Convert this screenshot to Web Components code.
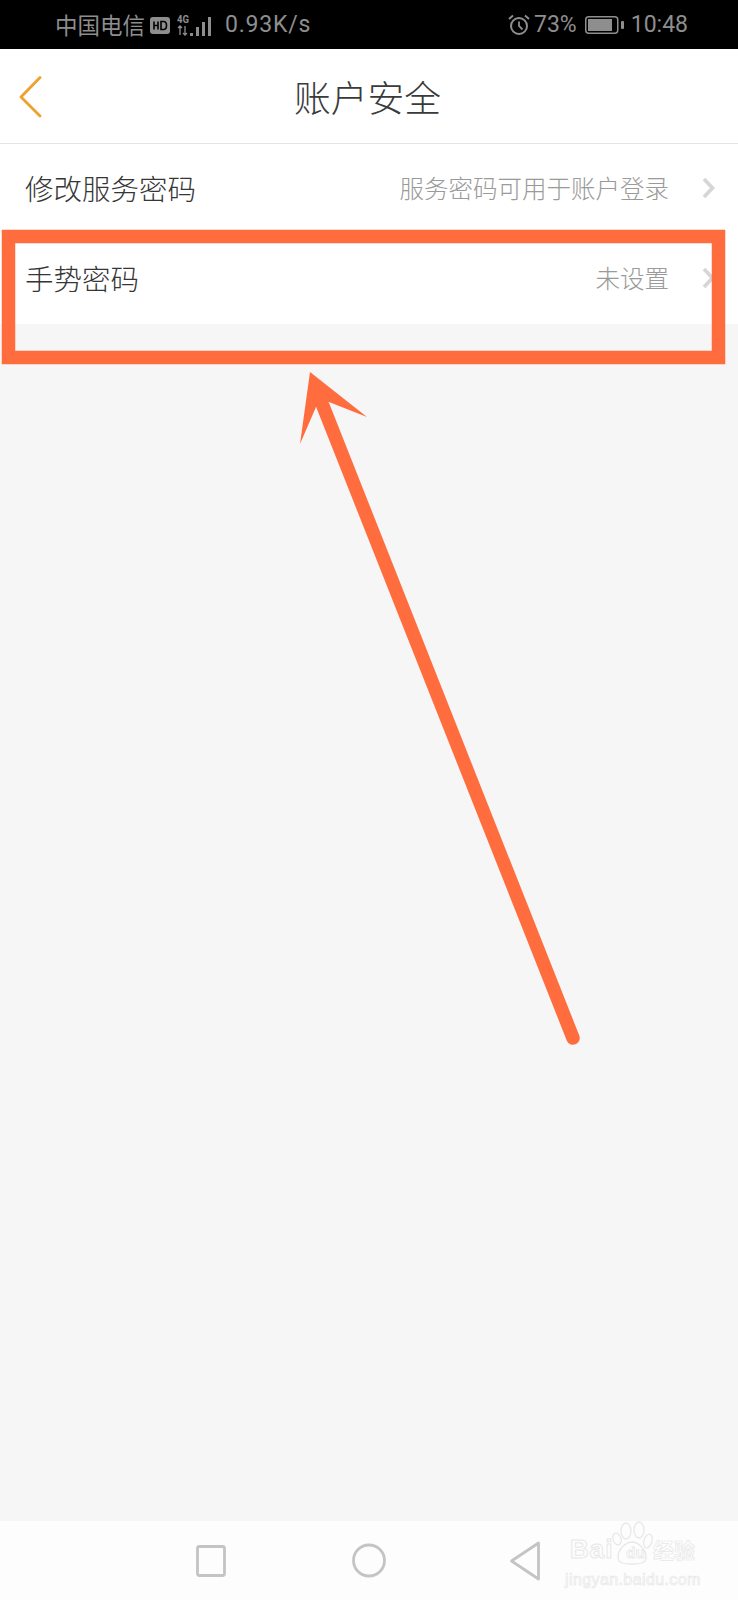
<!DOCTYPE html>
<html>
<head>
<meta charset="utf-8">
<style>
html, body { margin: 0; padding: 0; }
body { width: 738px; height: 1600px; overflow: hidden; font-family: "Noto Sans CJK SC", "Liberation Sans", sans-serif; }
</style>
</head>
<body>
<phone-screen>
  <status-bar slot="status"></status-bar>
  <title-bar slot="title">账户安全</title-bar>
  <setting-row label="修改服务密码" hint="服务密码可用于账户登录"></setting-row>
  <setting-row label="手势密码" hint="未设置"></setting-row>
  <nav-bar slot="nav"></nav-bar>
  <arrow-note slot="note"></arrow-note>
</phone-screen>

<script>
customElements.define('phone-screen', class extends HTMLElement {
    constructor() {
        super()
        let sr = this.attachShadow({mode: 'open'})
        sr.innerHTML = `
<style>
:host {
  display: flex;
  flex-direction: column;
  width: 738px;
  height: 1600px;
  position: relative;
  background: #f6f6f6;
}
#list { flex: 1; display: flex; flex-direction: column; }
</style>
<slot name="status"></slot>
<slot name="title"></slot>
<div id="list"><slot></slot></div>
<slot name="nav"></slot>
<slot name="note"></slot>`
    }
})

customElements.define('status-bar', class extends HTMLElement {
    constructor() {
        super()
        let sr = this.attachShadow({mode: 'open'})
        sr.innerHTML = `
<style>
:host {
  display: flex;
  align-items: center;
  height: 49px;
  background: #000;
  color: #8e8e8e;
  font: 23px/1 Roboto, "Noto Sans CJK SC", sans-serif;
  padding: 0 50px 0 55px;
  box-sizing: border-box;
}
span { white-space: nowrap; }
.cn { font-size: 22.500px; font-family: "Noto Sans CJK SC", sans-serif; }
svg { display: block; flex: none; }
#gap { flex: 1; }
</style>
<span class="cn">中国电信</span>
<svg width="20" height="17" viewBox="0 0 20 17" style="margin-left:5px;margin-top:2px">
  <rect width="20" height="17" rx="3" fill="#8e8e8e"/>
  <path d="M4 4.500v8M8 4.500v8M4 8.500h4" stroke="#000" stroke-width="1.600" fill="none"/>
  <path d="M11 4.500v8h2.500q3 0 3-4t-3-4z" stroke="#000" stroke-width="1.600" fill="none"/>
</svg>
<svg width="35" height="24" viewBox="0 0 35 24" style="margin-left:7px;margin-top:2px" fill="#8e8e8e">
  <text x="0" y="9" font-size="11" font-weight="700" font-family="Roboto" textLength="12" lengthAdjust="spacingAndGlyphs">4G</text>
  <path d="M3 12v9M1 14l2-2 2 2M8 12v9M6 19l2 2 2-2" stroke="#8e8e8e" stroke-width="1.300" fill="none"/>
  <rect x="13" y="19" width="3" height="3"/>
  <rect x="19" y="13" width="3" height="9"/>
  <rect x="25" y="8" width="3" height="14"/>
  <rect x="31" y="3" width="3" height="19"/>
</svg>
<span style="margin-left:13px;letter-spacing:.8px">0.93K/s</span>
<div id="gap"></div>
<svg width="24" height="24" viewBox="0 0 24 24" fill="none" stroke="#8e8e8e">
  <circle cx="12" cy="13" r="8" stroke-width="2"/>
  <path d="M12 8.500V13l3.500 3.500" stroke-width="1.800"/>
  <path d="M2 6l4-3.500M22 6l-4-3.500" stroke-width="2"/>
</svg>
<span style="margin-left:3px">73%</span>
<svg width="39" height="18" viewBox="0 0 39 18" style="margin-left:8px">
  <rect x=".75" y=".75" width="32" height="16.500" rx="3" fill="none" stroke="#8e8e8e" stroke-width="1.500"/>
  <rect x="3" y="3" width="24" height="12" fill="#8e8e8e"/>
  <rect x="36" y="5" width="3" height="8" rx="1" fill="#8e8e8e"/>
</svg>
<span style="margin-left:7px">10:48</span>`
    }
})

customElements.define('title-bar', class extends HTMLElement {
    constructor() {
        super()
        let sr = this.attachShadow({mode: 'open'})
        sr.innerHTML = `
<style>
:host {
  display: flex;
  align-items: center;
  justify-content: center;
  height: 95px;
  padding-right: 3px;
  position: relative;
  background: #fff;
  border-bottom: 1px solid #e4e4e4;
  color: #3a3a3a;
  font: 300 36.800px/1 "Noto Sans CJK SC", sans-serif;
  box-sizing: border-box;
}
svg { position: absolute; left: 18px; top: 27px; }
</style>
<svg width="26" height="42" viewBox="0 0 26 42" fill="none">
  <path d="M22 1.500 3 21l19 19" stroke="#f0a02c" stroke-width="2.800" stroke-linecap="round" stroke-linejoin="round"/>
</svg>
<slot></slot>`
    }
})

customElements.define('setting-row', class extends HTMLElement {
    constructor() {
        super()
        let sr = this.attachShadow({mode: 'open'})
        sr.innerHTML = `
<style>
:host {
  display: flex;
  align-items: center;
  height: 90px;
  padding: 0 23px 3px 25px;
  box-sizing: border-box;
  background: #fff;
  font-family: "Noto Sans CJK SC", sans-serif;
}
#label { flex: 1; font-size: 28.500px; font-weight: 300; color: #363636; }
#hint { font-size: 24.500px; font-weight: 300; color: #9a9a9a; }
svg { margin-left: 33px; flex: none; }
</style>
<span id="label">${this.getAttribute('label')}</span>
<span id="hint">${this.getAttribute('hint')}</span>
<svg width="13" height="22" viewBox="0 0 13 22" fill="none">
  <path d="M2 2l8.500 9L2 20" stroke="#d6d6d6" stroke-width="3.800"/>
</svg>`
    }
})

customElements.define('nav-bar', class extends HTMLElement {
    constructor() {
        super()
        let sr = this.attachShadow({mode: 'open'})
        sr.innerHTML = `
<style>
:host {
  display: block;
  height: 79px;
  position: relative;
  background: #fdfdfd;
}
svg { position: absolute; left: 0; top: 0; }
#mark {
  position: absolute;
  left: 565px;
  top: 19px;
  width: 136px;
  color: #fdfdfd;
  -webkit-text-stroke: 1px #e8e8e8;
  font-family: "Liberation Sans", "Noto Sans CJK SC", sans-serif;
  display: flex;
  flex-direction: column;
  gap: 14px;
}
#top { display: flex; align-items: center; height: 19px; padding-left: 5px; }
#bai { font-size: 26px; line-height: 19px; font-weight: 700; letter-spacing: 1px; width: 48px; }
#du { font-size: 15px; line-height: 19px; font-weight: 700; width: 35px; text-align: center; margin-top: 5px; -webkit-text-stroke-width: .8px; }
#cn { font: 700 21px/19px "Noto Sans CJK SC", sans-serif; -webkit-text-stroke-width: .7px; }
#jy { font-size: 16px; line-height: 14px; white-space: nowrap; letter-spacing: .4px; -webkit-text-stroke-width: .7px; }
</style>
<svg width="738" height="79" viewBox="0 0 738 79" fill="none" stroke="#c4c4c4" stroke-width="2.800" stroke-linejoin="round">
  <rect x="197.500" y="25.500" width="27" height="29" rx="2"/>
  <circle cx="369" cy="39.500" r="15.500"/>
  <path d="M511.500 40l27-18v36z"/>
  <g stroke="#e8e8e8" stroke-width="1.300">
    <path d="M618 36c0-8 8-15 14-15s14 7 14 15c0 6-5 7-14 7s-14-1-14-7z"/>
    <ellipse cx="617" cy="18" rx="4" ry="6" transform="rotate(-20 617 18)"/>
    <ellipse cx="626" cy="10" rx="5" ry="8"/>
    <ellipse cx="639" cy="9" rx="5" ry="8"/>
    <ellipse cx="648" cy="20" rx="4" ry="7" transform="rotate(15 648 20)"/>
  </g>
</svg>
<div id="mark">
  <div id="top">
    <span id="bai">Bai</span>
    <span id="du">du</span>
    <span id="cn">经验</span>
  </div>
  <span id="jy">jingyan.baidu.com</span>
</div>`
    }
})

customElements.define('arrow-note', class extends HTMLElement {
    constructor() {
        super()
        let sr = this.attachShadow({mode: 'open'})
        sr.innerHTML = `
<style>
:host { position: absolute; left: 0; top: 0; width: 738px; height: 1600px; pointer-events: none; }
svg { display: block; }
</style>
<svg width="738" height="1600" viewBox="0 0 738 1600" fill="none">
  <rect x="8.500" y="236.500" width="710" height="121" stroke="#ff6d3f" stroke-width="13.500"/>
  <path d="M573 1038 323 406" stroke="#ff6d3f" stroke-width="13.500" stroke-linecap="round"/>
  <path d="M310 372l57 45-38-15-13 5-16 37z" fill="#ff6d3f"/>
</svg>`
    }
})
</script>
</body>
</html>
